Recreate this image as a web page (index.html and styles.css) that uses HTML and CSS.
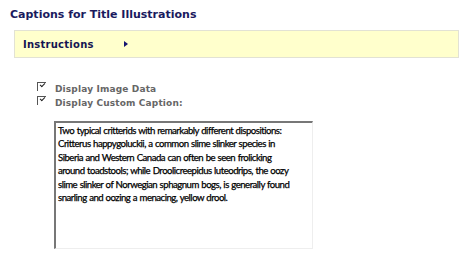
FILE: index.html
```html
<!DOCTYPE html>
<html lang="en">
<head>
  <meta charset="UTF-8" />
  <title>Captions for Title Illustrations</title>
  <link rel="stylesheet" href="styles.css">
</head>
<body>
  <h1 class="page-title">Captions for Title Illustrations</h1>

  <div class="instructions">
    <span class="instructions-label">Instructions</span>
    <span class="arrow"></span>
  </div>

  <div class="options">
    <label class="option"><span class="check"></span>Display Image Data</label>
    <label class="option"><span class="check"></span>Display Custom Caption:</label>
  </div>

  <div class="caption-box">Two typical critterids with remarkably different dispositions:<br>Critterus happygoluckii, a common slime slinker species in<br>Siberia and Western Canada can often be seen frolicking<br>around toadstools; while Droolicreepidus luteodrips, the oozy<br>slime slinker of Norwegian sphagnum bogs, is generally found<br>snarling and oozing a menacing, yellow drool.</div>
</body>
</html>
```

FILE: styles.css
```css
body {
  margin: 0;
  padding: 8px 10px 0 10px;
  background: #fff;
  font-family: "DejaVu Sans", Verdana, sans-serif;
}

.page-title {
  margin: 0;
  font-size: 11px;
  font-weight: bold;
  color: #1a1a5e;
  letter-spacing: 0;
  line-height: 13px;
}

.instructions {
  display: flex;
  align-items: center;
  margin: 9px 0 0 4px;
  width: 435px;
  height: 26px;
  background: #ffffcc;
  border: 1px solid #e2e2d4;
  padding-left: 8px;
}

.instructions-label {
  font-size: 10px;
  font-weight: bold;
  color: #141452;
  letter-spacing: 0.25px;
  width: 101px;
}

.arrow {
  width: 0;
  height: 0;
  border-top: 3px solid transparent;
  border-bottom: 3px solid transparent;
  border-left: 4px solid #141470;
}

.options {
  margin: 24px 0 0 27px;
  display: flex;
  flex-direction: column;
}

.option {
  display: flex;
  align-items: center;
  height: 14px;
  font-size: 9px;
  font-weight: bold;
  color: #666;
  letter-spacing: 0.15px;
}

.check {
  position: relative;
  width: 8px;
  height: 8px;
  border-top: 1px solid #555;
  border-left: 1px solid #555;
  margin: -6px 9px 0 0;
}

.check::after {
  content: "";
  position: absolute;
  left: 2px;
  top: 0;
  width: 4px;
  height: 2px;
  border-left: 1.5px solid #222;
  border-bottom: 1.5px solid #222;
  transform: rotate(-45deg);
}

.caption-box {
  margin: 11px 0 0 44px;
  width: 252px;
  height: 124px;
  padding: 1px 2px 0 2px;
  border-top: 2px solid #777;
  border-left: 2px solid #777;
  border-right: 1px solid #eee;
  border-bottom: 1px solid #eee;
  font-family: "Lato", sans-serif;
  font-size: 9.6px;
  line-height: 13.4px;
  letter-spacing: -0.5px;
  word-spacing: 0.5px;
  color: #000;
  -webkit-text-stroke: 0.25px #000;
  white-space: nowrap;
  overflow: hidden;
}
```
